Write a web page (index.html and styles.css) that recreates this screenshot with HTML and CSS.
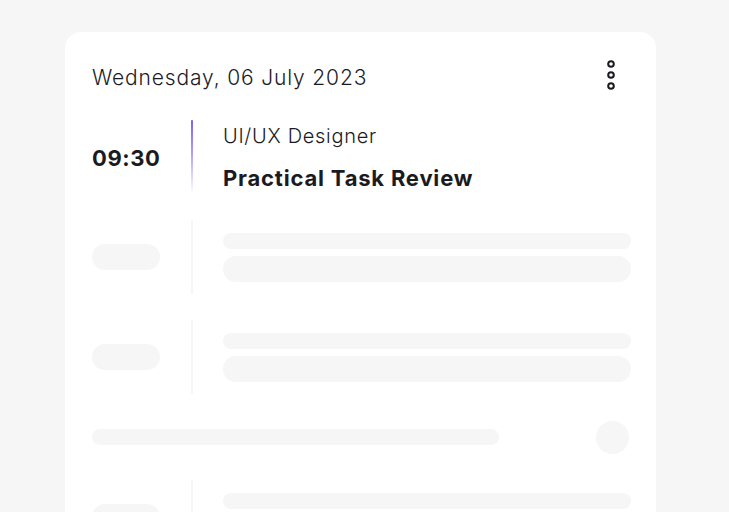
FILE: index.html
```html
<!DOCTYPE html>
<html>
<head>
<meta charset="utf-8">
<link rel="stylesheet" href="styles.css">
</head>
<body>
<div class="card">
  <div class="header">
    <div class="date">Wednesday, 06 July 2023</div>
    <svg class="more" width="10" height="30" viewBox="0 0 10 30">
      <circle cx="5" cy="4" r="2.8" fill="none" stroke="#1b1b1f" stroke-width="2"/>
      <circle cx="5" cy="15" r="2.8" fill="none" stroke="#1b1b1f" stroke-width="2"/>
      <circle cx="5" cy="26" r="2.8" fill="none" stroke="#1b1b1f" stroke-width="2"/>
    </svg>
  </div>
  <div class="list">
    <div class="row">
      <div class="time">09:30</div>
      <div class="divider active"></div>
      <div class="info">
        <div class="role">UI/UX Designer</div>
        <div class="title">Practical Task Review</div>
      </div>
    </div>
    <div class="row">
      <div class="sk-pill"></div>
      <div class="divider"></div>
      <div class="sk-lines">
        <div class="sk-line thin"></div>
        <div class="sk-line thick"></div>
      </div>
    </div>
    <div class="row">
      <div class="sk-pill"></div>
      <div class="divider"></div>
      <div class="sk-lines">
        <div class="sk-line thin"></div>
        <div class="sk-line thick"></div>
      </div>
    </div>
    <div class="bar-row">
      <div class="sk-bar"></div>
      <div class="sk-circle"></div>
    </div>
    <div class="row">
      <div class="sk-pill"></div>
      <div class="divider"></div>
      <div class="sk-lines">
        <div class="sk-line thin"></div>
        <div class="sk-line thick"></div>
      </div>
    </div>
  </div>
</div>
</body>
</html>
```
FILE: styles.css
```css
* { box-sizing: border-box; }
html, body {
  margin: 0;
  padding: 0;
  background: #f6f6f6;
  height: 512px;
  overflow: hidden;
}
body {
  font-family: Inter, "Noto Sans", sans-serif;
  color: #1b1b1f;
  padding: 32px 73px 0 65px;
}
.card {
  background: #ffffff;
  border-radius: 16px;
  width: 591px;
  height: 560px;
  padding: 24px 25px 0 27px;
}
.header {
  display: flex;
  justify-content: space-between;
  align-items: center;
  height: 40px;
  padding-right: 15px;
}
.date {
  font-size: 21px;
  font-weight: 300;
  letter-spacing: 0.85px;
  padding-top: 2px;
}
.more { display: block; margin-top: -2px; }
.list {
  margin-top: 24px;
  display: flex;
  flex-direction: column;
  gap: 26px;
}
.row {
  display: flex;
  align-items: center;
  height: 74px;
}
.time {
  width: 68px;
  font-size: 22px;
  font-weight: 700;
  letter-spacing: 0.6px;
  margin-top: 2px;
  white-space: nowrap;
}
.divider {
  width: 2px;
  height: 74px;
  margin: 0 30px 0 31px;
  background: #f6f6f6;
  border-radius: 1px;
  flex-shrink: 0;
}
.divider.active {
  background: linear-gradient(to bottom, #7a5ff5 0%, rgba(122,95,245,0.65) 40%, rgba(122,95,245,0) 100%);
}
.info {
  align-self: flex-start;
  padding-top: 4px;
  display: flex;
  flex-direction: column;
  gap: 16px;
}
.role {
  font-size: 20px;
  font-weight: 300;
  line-height: 24px;
  letter-spacing: 0.7px;
}
.title {
  font-size: 22px;
  font-weight: 700;
  line-height: 28px;
  letter-spacing: 0.8px;
}
.sk-pill {
  width: 68px;
  height: 26px;
  border-radius: 13px;
  background: #f6f6f6;
  flex-shrink: 0;
}
.sk-lines {
  flex: 1;
  display: flex;
  flex-direction: column;
  gap: 7px;
}
.sk-line {
  background: #f6f6f6;
  width: 408px;
}
.sk-line.thin { height: 16px; border-radius: 8px; }
.sk-line.thick { height: 26px; border-radius: 13px; }
.bar-row {
  display: flex;
  align-items: center;
  justify-content: space-between;
  height: 34px;
  padding-right: 2px;
}
.sk-bar {
  width: 407px;
  height: 16px;
  border-radius: 8px;
  background: #f6f6f6;
}
.sk-circle {
  width: 33px;
  height: 33px;
  border-radius: 50%;
  background: #f6f6f6;
}
```
